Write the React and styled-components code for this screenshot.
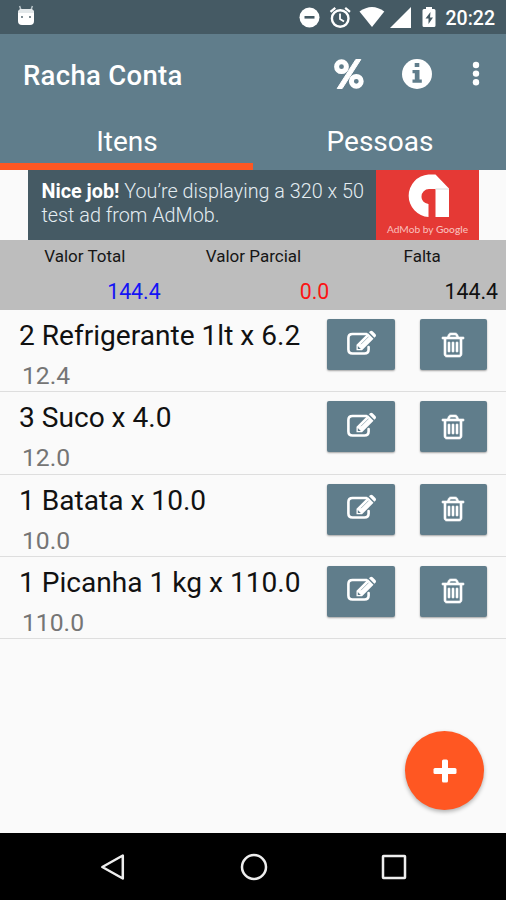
import styled, { createGlobalStyle } from "styled-components";

const items = [
  { name: "2 Refrigerante 1lt x 6.2", total: "12.4" },
  { name: "3 Suco x 4.0", total: "12.0" },
  { name: "1 Batata x 10.0", total: "10.0" },
  { name: "1 Picanha 1 kg x 110.0", total: "110.0" },
];

const AndroidIcon = () => (
  <svg width="18" height="21" viewBox="0 0 18 21">
    <path d="M4 5 2.6 1M14 5l1.400-4" stroke="#b8c4c9" strokeWidth="1.500" />
    <path d="M1 8q0-4 4-4h8q4 0 4 4v8q0 4-4 4H5q-4 0-4-4z" fill="#fff" />
    <path d="M1 8q0-4 4-4h8q4 0 4 4z" fill="#e3e8ea" />
    <circle cx="5" cy="12" r="0.900" fill="#455a64" />
    <circle cx="13" cy="12" r="0.900" fill="#455a64" />
  </svg>
);

const StatusIcons = () => (
  <svg width="140" height="24" viewBox="0 0 140 24" fill="#fff">
    <circle cx="10.500" cy="12.500" r="10" />
    <rect x="5.500" y="11" width="10" height="2.600" fill="#455a64" />
    <g fill="none" stroke="#fff">
      <circle cx="41.200" cy="13.500" r="8.300" strokeWidth="2.400" />
      <path d="M41 8.500v5.500l4 2.500" strokeWidth="1.800" />
      <path d="m31.500 6.800 4.800-4M51 6.800l-4.800-4" strokeWidth="2.200" />
    </g>
    <path d="M60.500 6.500Q73 -2.500 85.300 6.500L73 22z" />
    <path d="M112 2v21H91z" />
    <path d="M127 2h6v2h2q1.500 0 1.500 1.500v15q0 1.500-1.500 1.500h-10q-1.500 0-1.500-1.500v-15Q123.500 4 125 4h2z" />
    <path d="m131.500 7-5 6.500h3v5.500l4.500-6.500h-3z" fill="#455a64" />
  </svg>
);

const PercentIcon = () => (
  <svg width="32" height="32" viewBox="0 0 32 32" fill="none" stroke="#fff">
    <circle cx="8.500" cy="8.700" r="4.900" strokeWidth="5" />
    <circle cx="23.300" cy="23.300" r="4.900" strokeWidth="5" />
    <path d="m22.800 1.500h5L9.200 30.500h-5z" fill="#fff" strokeWidth="1" strokeLinejoin="round" />
  </svg>
);

const InfoIcon = () => (
  <svg width="30" height="30" viewBox="0 0 30 30">
    <circle cx="15" cy="15" r="15" fill="#fff" />
    <path
      d="M12.700 4h4.600v4h-4.600zM10.500 11h7v9.500h2.300v3.300h-9.300v-3.300h2.300v-6.200h-2.300z"
      fill="#607d8b"
    />
  </svg>
);

const MoreIcon = () => (
  <svg width="8" height="26" viewBox="0 0 8 26" fill="#fff">
    <circle cx="4" cy="4" r="3.200" />
    <circle cx="4" cy="12.600" r="3.200" />
    <circle cx="4" cy="21.200" r="3.200" />
  </svg>
);

const AdLogo = () => (
  <svg width="44" height="44" viewBox="0 0 44 44">
    <path
      d="M22.500 43A21.300 21.300 0 0 1 22.500 .500h7L43 14.500V43H29.500V15h-6.500a7.500 7.500 0 0 0-7.500 7.500c0 4 2.500 6.500 7 7.500z"
      fill="#fff"
    />
    <path d="M29.500 15H43" stroke="#d8d8d8" strokeWidth="1" />
  </svg>
);

const EditIcon = () => (
  <svg width="30" height="30" viewBox="0 0 30 30">
    <path
      d="M20.500 4H6.500Q2.400 4 2.400 8v11.500q0 4 4.100 4h12q4.100 0 4.100-4V17"
      fill="none"
      stroke="#fff"
      strokeWidth="2.600"
      strokeLinecap="round"
    />
    <path
      d="M10.500 14.800 22 3.300l5.500 5.500L16 20.300h-5.500zM23 2.300l1-1q1.300-1.200 2.600 0l2.800 2.800q1.200 1.300 0 2.600l-1 1z"
      fill="#fff"
    />
    <path d="M11.800 16v3h3z" fill="#607d8b" />
    <path d="m15 14.200 7.500-7.500" stroke="#a9bac2" strokeWidth="1" />
  </svg>
);

const TrashIcon = () => (
  <svg width="28" height="28" viewBox="0 0 1792 1792" fill="#fff" stroke="#fff" strokeWidth="40">
    <path d="M704 736v576q0 14-9 23t-23 9h-64q-14 0-23-9t-9-23v-576q0-14 9-23t23-9h64q14 0 23 9t9 23zm256 0v576q0 14-9 23t-23 9h-64q-14 0-23-9t-9-23v-576q0-14 9-23t23-9h64q14 0 23 9t9 23zm256 0v576q0 14-9 23t-23 9h-64q-14 0-23-9t-9-23v-576q0-14 9-23t23-9h64q14 0 23 9t9 23zm128 724v-948h-896v948q0 22 7 40.500t14.500 27 10.500 8.500h832q3 0 10.500-8.500t14.500-27 7-40.500zm-672-1076h448l-48-117q-7-9-17-11h-317q-10 2-17 11zm928 32v64q0 14-9 23t-23 9h-96v948q0 83-47 143.500t-113 60.500h-832q-66 0-113-58.500t-47-141.500v-952h-96q-14 0-23-9t-9-23v-64q0-14 9-23t23-9h309l70-167q15-37 54-63t79-26h320q40 0 79 26t54 63l70 167h309q14 0 23 9t9 23z" />
  </svg>
);

const App = () => {
  return (
    <Screen>
      <GlobalStyle />
      <StatusBar>
        <AndroidIcon />
        <StatusRight>
          <StatusIcons />
          <Clock>20:22</Clock>
        </StatusRight>
      </StatusBar>
      <Toolbar>
        <Title>Racha Conta</Title>
        <Actions>
          <PercentIcon />
          <InfoIcon />
          <MoreIcon />
        </Actions>
      </Toolbar>
      <Tabs>
        <Tab $active>Itens</Tab>
        <Tab>Pessoas</Tab>
      </Tabs>
      <AdBanner>
        <AdText>
          <b>Nice job!</b> You’re displaying a 320 x 50
          <br />
          test ad from AdMob.
        </AdText>
        <AdBrand>
          <AdLogo />
          <AdCaption>
            AdMob by <b>Google</b>
          </AdCaption>
        </AdBrand>
      </AdBanner>
      <Summary>
        <SummaryCell>
          <SummaryLabel>Valor Total</SummaryLabel>
          <SummaryValue $color="#1414f5">144.4</SummaryValue>
        </SummaryCell>
        <SummaryCell>
          <SummaryLabel>Valor Parcial</SummaryLabel>
          <SummaryValue $color="#fb1414">0.0</SummaryValue>
        </SummaryCell>
        <SummaryCell>
          <SummaryLabel>Falta</SummaryLabel>
          <SummaryValue $color="#111">144.4</SummaryValue>
        </SummaryCell>
      </Summary>
      <ItemList>
        {items.map((item) => (
          <Item key={item.name}>
            <ItemInfo>
              <ItemName>{item.name}</ItemName>
              <ItemTotal>{item.total}</ItemTotal>
            </ItemInfo>
            <ItemButton aria-label="Editar">
              <EditIcon />
            </ItemButton>
            <ItemButton aria-label="Remover">
              <TrashIcon />
            </ItemButton>
          </Item>
        ))}
      </ItemList>
      <AddButton aria-label="Adicionar">
        <svg width="24" height="24" viewBox="0 0 24 24" fill="#fff">
          <rect x="9" y="0.500" width="6" height="23" rx="1.500" />
          <rect x="0.500" y="9" width="23" height="6" rx="1.500" />
        </svg>
      </AddButton>
      <NavBar>
        <svg width="28" height="28" viewBox="0 0 28 28">
          <path d="M3.300 14 23.800 2.500v23z" />
        </svg>
        <svg width="28" height="28" viewBox="0 0 28 28">
          <circle cx="14" cy="14" r="12" />
        </svg>
        <svg width="28" height="28" viewBox="0 0 28 28">
          <rect x="3" y="3" width="22" height="22" rx="0.500" />
        </svg>
      </NavBar>
    </Screen>
  );
};

export default App;

const GlobalStyle = createGlobalStyle`
  * {
    box-sizing: border-box;
  }

  body {
    margin: 0;
    font-family: Roboto, "Noto Sans", sans-serif;
    background: #fafafa;
  }

  svg {
    display: block;
    flex-shrink: 0;
  }
`;

const Screen = styled.div`
  position: relative;
  display: flex;
  flex-direction: column;
  width: 506px;
  height: 900px;
  background: #fafafa;
  overflow: hidden;
`;

const StatusBar = styled.div`
  display: flex;
  justify-content: space-between;
  height: 34px;
  padding: 5px 11px 0 17px;
  background: #455a64;
  flex-shrink: 0;
`;

const StatusRight = styled.div`
  display: flex;
  gap: 7px;
`;

const Clock = styled.span`
  font-size: 19.5px;
  line-height: 27px;
  font-weight: 500;
  color: #fff;
`;

const Toolbar = styled.header`
  display: flex;
  align-items: center;
  justify-content: space-between;
  height: 80px;
  padding: 0 26px 0 23px;
  background: #607d8b;
  flex-shrink: 0;
`;

const Title = styled.h1`
  margin: 3px 0 0;
  font-size: 27.5px;
  font-weight: 500;
  letter-spacing: 0.3px;
  color: #fff;
`;

const Actions = styled.div`
  display: flex;
  align-items: center;
  gap: 37px;
  color: #fff;

  svg:last-child {
    margin-left: 3px;
  }
`;

const Tabs = styled.nav`
  display: flex;
  height: 56px;
  background: #607d8b;
  flex-shrink: 0;
`;

const Tab = styled.div`
  flex: 1;
  padding-left: 1px;
  text-align: center;
  font-size: 28px;
  line-height: 56px;
  color: #fff;
  border-bottom: 7px solid ${(props) => (props.$active ? "#ff5722" : "transparent")};
`;

const AdBanner = styled.div`
  display: flex;
  width: 451px;
  height: 70px;
  margin-left: 28px;
  background: #455a64;
  flex-shrink: 0;
`;

const AdText = styled.div`
  flex: 1;
  padding: 10px 0 0 13.5px;
  font-size: 19.8px;
  line-height: 23.5px;
  font-weight: 300;
  white-space: nowrap;
  color: #e4edf2;

  b {
    font-weight: 700;
    color: #fff;
  }
`;

const AdBrand = styled.div`
  display: flex;
  flex-direction: column;
  align-items: center;
  width: 103px;
  padding-top: 4px;
  background: #e53935;
`;

const AdCaption = styled.span`
  margin-top: 4px;
  font-family: Lato, sans-serif;
  font-size: 10.2px;
  line-height: 14px;
  white-space: nowrap;
  color: #f9c0be;

  b {
    font-weight: 500;
  }
`;

const Summary = styled.div`
  display: flex;
  height: 70px;
  background: #bdbdbd;
  flex-shrink: 0;
`;

const SummaryCell = styled.div`
  flex: 1;
  padding: 5px 8px 0 0;
`;

const SummaryLabel = styled.div`
  margin-right: -9px;
  text-align: center;
  font-size: 17px;
  line-height: 22px;
  color: #161616;
`;

const SummaryValue = styled.div`
  margin-top: 11px;
  text-align: right;
  font-size: 21.3px;
  line-height: 28px;
  color: ${(props) => props.$color};
`;

const ItemList = styled.div`
  flex: 1;
`;

const Item = styled.div`
  display: flex;
  height: 82.33px;
  padding: 9px 19px 0;
  border-bottom: 1.5px solid #dedede;
`;

const ItemInfo = styled.div`
  flex: 1;
  white-space: nowrap;
`;

const ItemName = styled.div`
  font-size: 28.1px;
  line-height: 34px;
  color: #111;
`;

const ItemTotal = styled.div`
  margin-top: 6px;
  padding-left: 3px;
  font-size: 24.7px;
  line-height: 34px;
  color: #757575;
`;

const ItemButton = styled.button`
  display: flex;
  align-items: center;
  justify-content: center;
  width: 67.5px;
  height: 51px;
  margin-left: 25px;
  padding: 0;
  border: none;
  border-radius: 2px;
  background: #607d8b;
  box-shadow: 0 1px 2px rgba(0, 0, 0, 0.35);
`;

const AddButton = styled.button`
  position: absolute;
  right: 22px;
  bottom: 90px;
  display: flex;
  align-items: center;
  justify-content: center;
  width: 79px;
  height: 79px;
  padding: 0;
  border: none;
  border-radius: 50%;
  background: #ff5722;
  box-shadow: 0 2px 4px rgba(0, 0, 0, 0.3);
`;

const NavBar = styled.div`
  display: flex;
  align-items: center;
  justify-content: center;
  gap: 112.5px;
  height: 67px;
  padding-left: 1px;
  background: #000;
  flex-shrink: 0;

  svg {
    fill: none;
    stroke: #eee;
    stroke-width: 2.5px;
    stroke-linejoin: round;
  }
`;
